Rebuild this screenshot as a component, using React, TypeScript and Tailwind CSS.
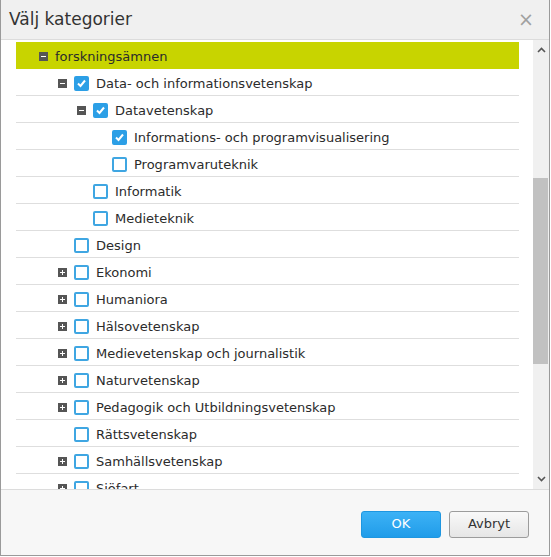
import React from 'react'

type Node = {
  label: string
  level: number
  toggle?: 'open' | 'closed'
  checked?: boolean
  noCheck?: boolean
  active?: boolean
}

const nodes: Node[] = [
  { label: 'forskningsämnen', level: 0, toggle: 'open', noCheck: true, active: true },
  { label: 'Data- och informationsvetenskap', level: 1, toggle: 'open', checked: true },
  { label: 'Datavetenskap', level: 2, toggle: 'open', checked: true },
  { label: 'Informations- och programvisualisering', level: 3, checked: true },
  { label: 'Programvaruteknik', level: 3 },
  { label: 'Informatik', level: 2 },
  { label: 'Medieteknik', level: 2 },
  { label: 'Design', level: 1 },
  { label: 'Ekonomi', level: 1, toggle: 'closed' },
  { label: 'Humaniora', level: 1, toggle: 'closed' },
  { label: 'Hälsovetenskap', level: 1, toggle: 'closed' },
  { label: 'Medievetenskap och journalistik', level: 1, toggle: 'closed' },
  { label: 'Naturvetenskap', level: 1, toggle: 'closed' },
  { label: 'Pedagogik och Utbildningsvetenskap', level: 1, toggle: 'closed' },
  { label: 'Rättsvetenskap', level: 1 },
  { label: 'Samhällsvetenskap', level: 1, toggle: 'closed' },
  { label: 'Sjöfart', level: 1, toggle: 'closed' },
]

const indent = ['pl-[23px]', 'pl-[42px]', 'pl-[61px]', 'pl-[80px]']

function Toggle({ kind }: { kind?: 'open' | 'closed' }) {
  if (!kind) return <span className="w-[9px] h-[9px] mr-[7px] shrink-0" />
  return (
    <span className="relative w-[9px] h-[9px] mr-[7px] shrink-0 bg-[#555]">
      <span className="absolute left-[2px] top-[4px] w-[5px] h-px bg-white" />
      {kind === 'closed' && <span className="absolute left-[4px] top-[2px] w-px h-[5px] bg-white" />}
    </span>
  )
}

function Checkbox({ checked }: { checked?: boolean }) {
  return (
    <span
      className={`mr-[7px] flex h-[15px] w-[15px] shrink-0 items-center justify-center rounded-[2px] border-2 ${
        checked ? 'border-[#2c9fe6] bg-[#2c9fe6]' : 'border-[#3fa6e2] bg-white'
      }`}
    >
      {checked && (
        <svg width="11" height="11" viewBox="0 0 11 11">
          <path d="M2 5.5 L4.5 8 L9 2.5" fill="none" stroke="white" strokeWidth="2" />
        </svg>
      )}
    </span>
  )
}

export default function App() {
  return (
    <div className="w-[551px] h-[557px] bg-white text-[#2b2b2b]" style={{ fontFamily: 'Verdana, "DejaVu Sans", sans-serif' }}>
      <div className="flex h-[556px] w-[550px] flex-col border-x border-b border-[#9a9a9a]">
        <div className="flex h-[40px] shrink-0 items-center justify-between border-b border-[#dcdcdc] bg-[#f0f0f0] pl-[8px] pr-[15px]">
          <h3 className="pt-px text-[17px] text-[#333]">Välj kategorier</h3>
          <span className="text-[19px] leading-none text-[#a0a0a0]">×</span>
        </div>

        <div className="flex h-[449px] shrink-0 overflow-hidden">
          <div className="flex-1 overflow-hidden pl-[15px] pr-[14px] pt-[2px] text-[13px]">
            {nodes.map((n) => (
              <div
                key={n.label}
                className={`flex items-center ${indent[n.level]} ${
                  n.active ? 'h-[27px] bg-[#c8d400] pt-[2px]' : 'h-[27px] border-b border-[#dedede] pt-[3px]'
                }`}
              >
                <Toggle kind={n.toggle} />
                {!n.noCheck && <Checkbox checked={n.checked} />}
                <span className="whitespace-nowrap">{n.label}</span>
              </div>
            ))}
          </div>
          <div className="flex w-[16px] shrink-0 flex-col bg-[#f0f0f0]">
            <div className="flex h-[16px] items-center justify-center pt-[4px]">
              <svg width="9" height="6" viewBox="0 0 9 6">
                <path d="M1 5 L4.5 1.5 L8 5" fill="none" stroke="#555" strokeWidth="1.6" />
              </svg>
            </div>
            <div className="mt-[122px] h-[186px] w-[15px] bg-[#c1c1c1]" />
            <div className="flex-1" />
            <div className="flex h-[16px] items-center justify-center pb-[4px]">
              <svg width="9" height="6" viewBox="0 0 9 6">
                <path d="M1 1 L4.5 4.5 L8 1" fill="none" stroke="#555" strokeWidth="1.6" />
              </svg>
            </div>
          </div>
        </div>

        <div className="flex flex-1 items-center justify-end gap-[8px] border-t border-[#dcdcdc] bg-[#f7f7f7] pr-[20px] pt-[3px] text-[13px]">
          <button className="h-[27px] w-[80px] rounded-[3px] border border-[#1e96e0] bg-gradient-to-b from-[#3cb2f6] to-[#1f9ce9] text-white">
            OK
          </button>
          <button className="h-[27px] w-[80px] rounded-[3px] border border-[#9c9c9c] bg-gradient-to-b from-[#f9f9f9] to-[#e6e6e6] text-[#333]">
            Avbryt
          </button>
        </div>
      </div>
    </div>
  )
}
